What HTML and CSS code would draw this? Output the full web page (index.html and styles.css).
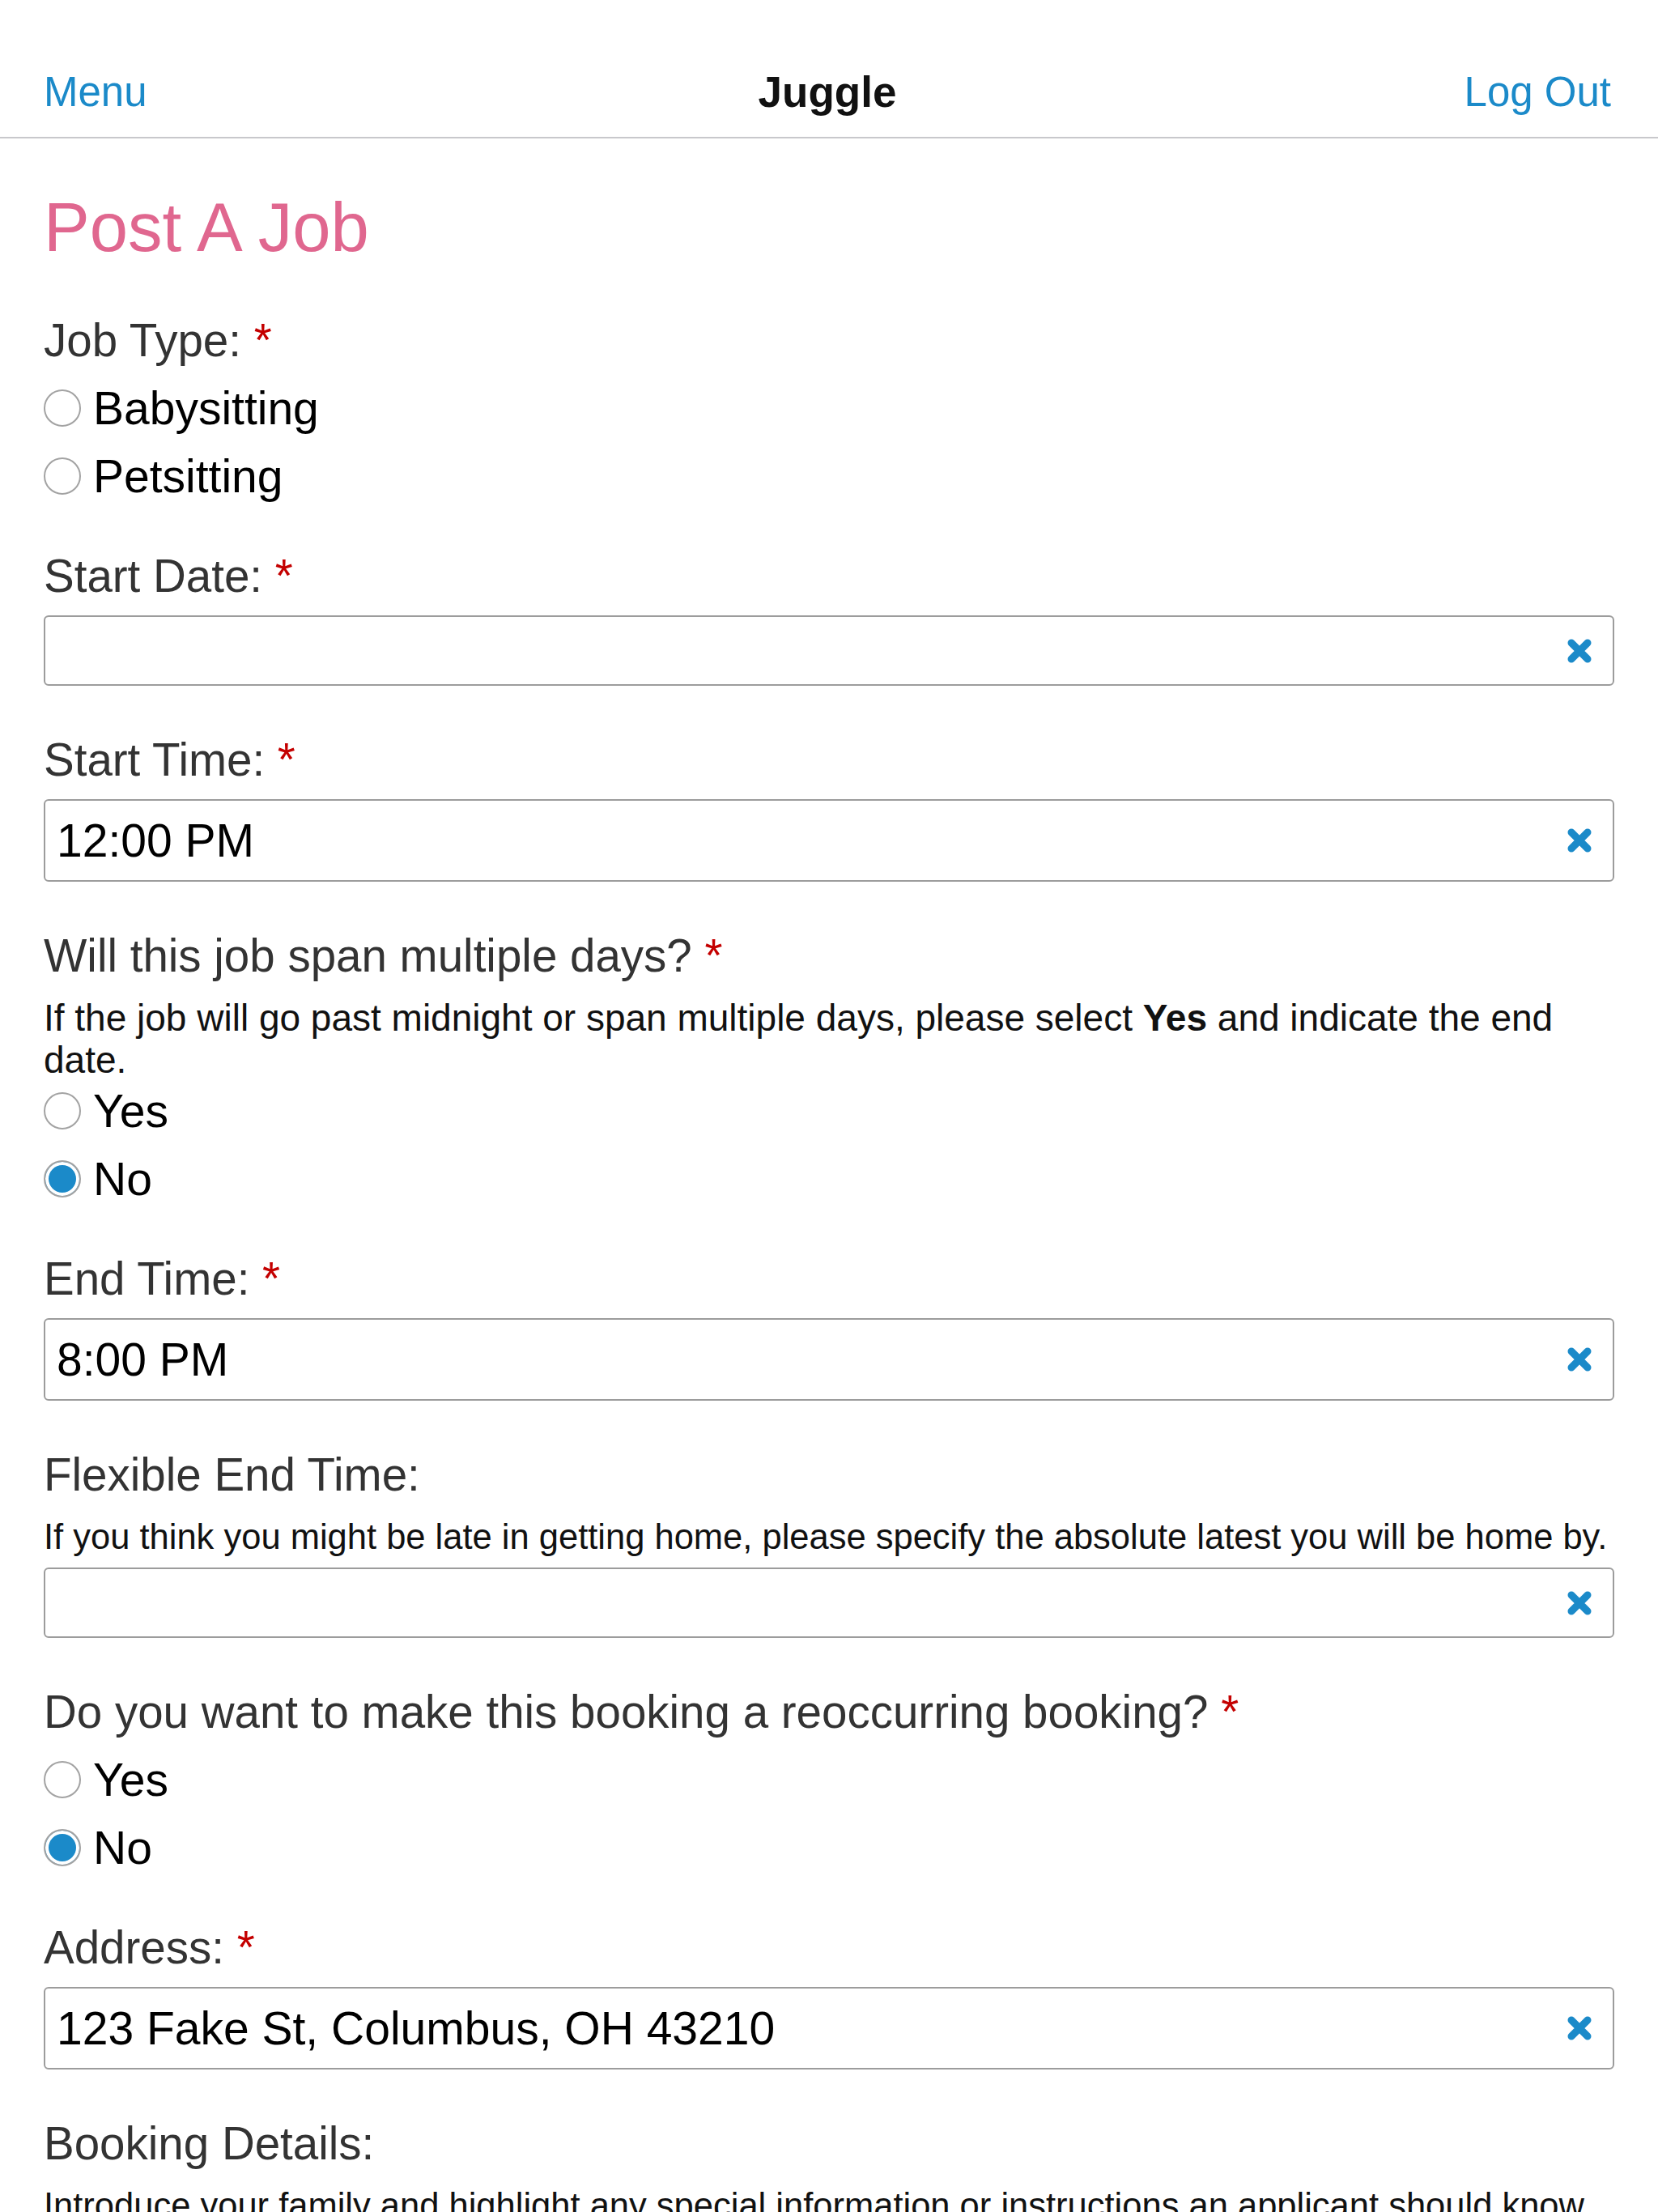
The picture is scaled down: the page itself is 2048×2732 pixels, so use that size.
FILE: index.html
```html
<!DOCTYPE html>
<html lang="en">
<head>
    <meta charset="UTF-8">
    <meta name="viewport" content="width=device-width, initial-scale=1.0">
    <title>Juggle - Post A Job</title>
    <link rel="stylesheet" href="styles.css">
</head>
<body>
    <header class="topbar">
        <a href="#" class="topbar-link">Menu</a>
        <span class="topbar-title">Juggle</span>
        <a href="#" class="topbar-link topbar-right">Log Out</a>
    </header>

    <main class="page">
        <h1 class="page-title">Post A Job</h1>

        <form id="jobForm">
            <div class="field field-choice">
                <div class="label">Job Type: <span class="req">*</span></div>
                <div class="choices">
                    <label class="choice"><input type="radio" name="jobType" value="baby"> Babysitting</label>
                    <label class="choice"><input type="radio" name="jobType" value="pet"> Petsitting</label>
                </div>
            </div>

            <div class="field">
                <div class="label">Start Date: <span class="req">*</span></div>
                <div class="input-box input-empty">
                    <input type="text" id="startDate" value="">
                    <button type="button" class="clear" aria-label="Clear">
                        <svg viewBox="0 0 32 32"><path d="M6 6L26 26M26 6L6 26"/></svg>
                    </button>
                </div>
            </div>

            <div class="field">
                <div class="label">Start Time: <span class="req">*</span></div>
                <div class="input-box">
                    <input type="text" id="startTime" value="12:00 PM">
                    <button type="button" class="clear" aria-label="Clear">
                        <svg viewBox="0 0 32 32"><path d="M6 6L26 26M26 6L6 26"/></svg>
                    </button>
                </div>
            </div>

            <div class="field field-choice">
                <div class="label">Will this job span multiple days? <span class="req">*</span></div>
                <p class="help help-lg">If the job will go past midnight or span multiple days, please select <b>Yes</b> and indicate the end date.</p>
                <div class="choices">
                    <label class="choice"><input type="radio" name="multiDay" value="yes"> Yes</label>
                    <label class="choice"><input type="radio" name="multiDay" value="no" checked> No</label>
                </div>
            </div>

            <div class="field">
                <div class="label">End Time: <span class="req">*</span></div>
                <div class="input-box">
                    <input type="text" id="endTime" value="8:00 PM">
                    <button type="button" class="clear" aria-label="Clear">
                        <svg viewBox="0 0 32 32"><path d="M6 6L26 26M26 6L6 26"/></svg>
                    </button>
                </div>
            </div>

            <div class="field">
                <div class="label">Flexible End Time:</div>
                <p class="help">If you think you might be late in getting home, please specify the absolute latest you will be home by.</p>
                <div class="input-box input-empty">
                    <input type="text" id="flexTime" value="">
                    <button type="button" class="clear" aria-label="Clear">
                        <svg viewBox="0 0 32 32"><path d="M6 6L26 26M26 6L6 26"/></svg>
                    </button>
                </div>
            </div>

            <div class="field field-choice">
                <div class="label">Do you want to make this booking a reoccurring booking? <span class="req">*</span></div>
                <div class="choices">
                    <label class="choice"><input type="radio" name="repeat" value="yes"> Yes</label>
                    <label class="choice"><input type="radio" name="repeat" value="no" checked> No</label>
                </div>
            </div>

            <div class="field">
                <div class="label">Address: <span class="req">*</span></div>
                <div class="input-box">
                    <input type="text" id="address" value="123 Fake St, Columbus, OH 43210">
                    <button type="button" class="clear" aria-label="Clear">
                        <svg viewBox="0 0 32 32"><path d="M6 6L26 26M26 6L6 26"/></svg>
                    </button>
                </div>
            </div>

            <div class="field">
                <div class="label">Booking Details:</div>
                <p class="help">Introduce your family and highlight any special information or instructions an applicant should know</p>
                <textarea class="details" id="details"></textarea>
            </div>
        </form>
    </main>

    <script>
        document.querySelectorAll('.clear').forEach(function (btn) {
            btn.addEventListener('click', function () {
                btn.parentNode.querySelector('input').value = '';
            });
        });
    </script>
</body>
</html>
```

FILE: styles.css
```css
body {
    font-family: "Liberation Sans", Arial, sans-serif;
    margin: 0;
    background-color: #fff;
    color: #000;
}

.topbar {
    display: grid;
    grid-template-columns: 1fr auto 1fr;
    align-items: end;
    height: 169px;
    padding: 0 58px 0 54px;
    border-bottom: 2px solid #c8c8cc;
    box-sizing: content-box;
}

.topbar-link,
.topbar-title {
    line-height: 60px;
    padding-bottom: 25px;
}

.topbar-link {
    color: #1b8ac9;
    text-decoration: none;
    font-size: 51px;
}

.topbar-right {
    justify-self: end;
}

.topbar-title {
    font-size: 53px;
    font-weight: bold;
    color: #111;
}

.page {
    padding: 62px 54px 0;
}

.page-title {
    margin: 0 0 61px;
    font-size: 85px;
    font-weight: normal;
    line-height: 95px;
    color: #e0678f;
}

.field {
    margin-bottom: 60px;
}

.field-choice {
    margin-bottom: 50px;
}

.label {
    font-size: 56.5px;
    line-height: 64px;
    color: #333;
}

.req {
    color: #c40000;
}

.help {
    margin: 18px 0 0;
    font-size: 43.5px;
    line-height: 52px;
    color: #111;
}

.help-lg {
    font-size: 46px;
}

.choices {
    margin-top: 9px;
}

.help + .choices {
    margin-top: -5px;
}

.choice {
    display: flex;
    align-items: center;
    gap: 15px;
    height: 84px;
    font-size: 57px;
}

.choice input {
    appearance: none;
    -webkit-appearance: none;
    width: 46px;
    height: 46px;
    margin: 0;
    border: 2px solid #a3a3a3;
    border-radius: 50%;
    background: #fff;
}

.choice input:checked {
    background: #1b8ac9;
    box-shadow: inset 0 0 0 4px #fff;
}

.input-box {
    display: flex;
    align-items: center;
    height: 102px;
    margin-top: 16px;
    padding: 0 25px 0 14px;
    border: 2px solid #9c9c9c;
    border-radius: 6px;
    box-sizing: border-box;
}

.input-empty {
    height: 87px;
}

.help + .input-box {
    margin-top: 12px;
}

.input-box input {
    flex: 1;
    border: none;
    outline: none;
    padding: 0;
    font-family: inherit;
    font-size: 57px;
    color: #000;
    background: transparent;
}

.clear {
    display: flex;
    padding: 0;
    border: none;
    background: none;
    cursor: pointer;
}

.clear svg {
    width: 32px;
    height: 32px;
}

.clear path {
    stroke: #1b8ac9;
    stroke-width: 9;
    stroke-linecap: round;
    fill: none;
}

.details {
    display: block;
    width: 100%;
    height: 300px;
    margin-top: 12px;
    border: 2px solid #9c9c9c;
    border-radius: 6px;
    box-sizing: border-box;
}
```
